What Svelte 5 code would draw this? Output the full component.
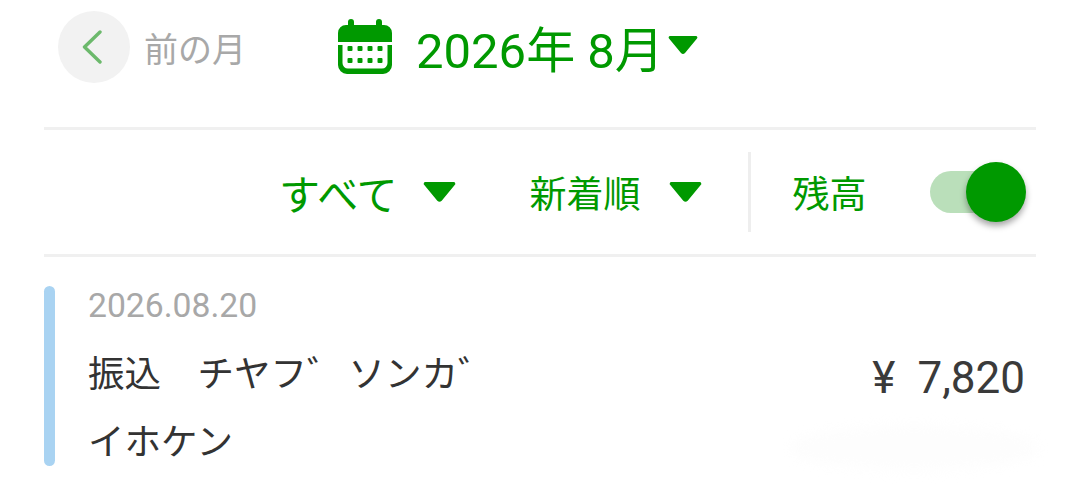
<script>
  let showBalance = $state(true)
</script>

<div class="page">
  <header class="month-bar">
    <div class="prev">
      <button type="button" class="prev-btn" aria-label="前の月">
        <svg width="24" height="34" viewBox="0 0 24 34"><path d="M20 2 L4.500 17 L20 32" fill="none" stroke="#6cb96c" stroke-width="3.400" stroke-linecap="round" stroke-linejoin="round"/></svg>
      </button>
      <span class="prev-label">前の月</span>
    </div>
    <div class="current">
      <svg class="cal" width="54" height="55" viewBox="0 0 54 55">
        <path fill="#009900" d="M10 3a3 3 0 0 1 6 0v3h22V3a3 3 0 0 1 6 0v3h2a8 8 0 0 1 8 8v9H0v-9a8 8 0 0 1 8-8h2z"/>
        <path fill="#009900" d="M0 26h4.500v18a5.500 5.500 0 0 0 5.500 5.500h34a5.500 5.500 0 0 0 5.500-5.500V26H54v20a9 9 0 0 1-9 9H9a9 9 0 0 1-9-9z"/>
        {#each [27, 39] as y}
          {#each [9.500, 19.500, 29.500, 39.500] as x}
            <rect {x} {y} width="5" height="5" rx="1" fill="#009900"/>
          {/each}
        {/each}
      </svg>
      <span class="month">2026年 8月</span>
      <svg class="arrow" width="30" height="20" viewBox="0 0 30 20"><path d="M2 1h26a1.500 1.500 0 0 1 1 2.500L17 18a3 3 0 0 1-4 0L1 3.500A1.500 1.500 0 0 1 2 1z" fill="#009900"/></svg>
    </div>
  </header>

  <div class="filters">
    <button type="button" class="filter kind">
      <span>すべて</span>
      <svg width="33" height="22" viewBox="0 0 30 20"><path d="M2 1h26a1.500 1.500 0 0 1 1 2.500L17 18a3 3 0 0 1-4 0L1 3.500A1.500 1.500 0 0 1 2 1z" fill="#009900"/></svg>
    </button>
    <button type="button" class="filter order">
      <span>新着順</span>
      <svg width="33" height="22" viewBox="0 0 30 20"><path d="M2 1h26a1.500 1.500 0 0 1 1 2.500L17 18a3 3 0 0 1-4 0L1 3.500A1.500 1.500 0 0 1 2 1z" fill="#009900"/></svg>
    </button>
    <div class="balance">
      <span>残高</span>
      <button type="button" class="toggle" class:on={showBalance} aria-label="残高" onclick={() => (showBalance = !showBalance)}>
        <span class="knob"></span>
      </button>
    </div>
  </div>

  <div class="entry">
    <div class="marker"></div>
    <div class="info">
      <div class="date">2026.08.20</div>
      <div class="name">振込　チヤフ゛ ソンカ゛<br />イホケン</div>
    </div>
    <div class="amount"><span class="yen">¥</span>7,820</div>
    <div class="smudge"></div>
  </div>
</div>

<style>
  :global(body) {
    margin: 0;
    background: #fff;
  }

  .page {
    width: 1080px;
    height: 490px;
    box-sizing: border-box;
    padding: 0 44px;
    overflow: hidden;
    font-family: Roboto, "Noto Sans CJK JP", sans-serif;
  }

  button {
    border: none;
    background: none;
    padding: 0;
    font: inherit;
    color: inherit;
    cursor: pointer;
  }

  .month-bar {
    height: 130px;
    box-sizing: border-box;
    border-bottom: 3px solid #f0f0f0;
    display: flex;
    align-items: flex-start;
  }

  .prev {
    display: flex;
    align-items: center;
    margin: 11px 0 0 14px;
    width: 280px;
  }

  .prev-btn {
    width: 72px;
    height: 72px;
    border-radius: 50%;
    background: #f2f2f2;
    display: flex;
    align-items: center;
    justify-content: center;
    padding-right: 4px;
    box-sizing: border-box;
  }

  .prev-label {
    margin-left: 14px;
    font-size: 34px;
    color: #a8a8a8;
  }

  .current {
    display: flex;
    align-items: center;
    height: 93px;
    color: #009900;
  }

  .month {
    margin: 10px 0 0 24px;
    font-size: 49px;
    line-height: 1;
  }

  .arrow {
    margin: 0 0 3px 4px;
  }

  .filters {
    height: 127px;
    box-sizing: border-box;
    border-bottom: 3px solid #f0f0f0;
    display: flex;
    align-items: center;
    color: #009900;
    font-size: 37px;
  }

  .filter {
    display: flex;
    align-items: center;
    color: #009900;
  }

  .kind {
    margin-left: 235px;
    font-size: 41px;
  }

  .kind svg {
    margin-left: 25px;
  }

  .order {
    margin-left: 74px;
    font-size: 37px;
  }

  .order svg {
    margin-left: 28px;
  }

  .balance {
    margin-left: 46px;
    height: 80px;
    border-left: 3px solid #eeeeee;
    display: flex;
    align-items: center;
    font-size: 37px;
    padding-left: 42px;
  }

  .toggle {
    position: relative;
    margin-left: 63px;
    width: 90px;
    height: 42px;
    border-radius: 21px;
    background: #badfba;
  }

  .knob {
    position: absolute;
    top: -9px;
    right: -6px;
    width: 60px;
    height: 60px;
    border-radius: 50%;
    background: #009900;
    box-shadow: 0 4px 6px rgba(0, 0, 0, 0.35);
  }

  .toggle:not(.on) .knob {
    right: auto;
    left: -6px;
    background: #ccc;
  }

  .entry {
    position: relative;
    display: flex;
    align-items: stretch;
    margin-top: 29px;
    height: 180px;
  }

  .marker {
    width: 11px;
    background: #a9d3f2;
    border-radius: 6px;
  }

  .info {
    margin-left: 34px;
    flex: 1;
  }

  .date {
    font-size: 33.700px;
    line-height: 40px;
    color: #a8a8a8;
    margin-left: -1px;
  }

  .name {
    margin-top: 15px;
    font-size: 36.500px;
    line-height: 68px;
    word-spacing: -4px;
    color: #333;
    white-space: pre;
    margin-left: -1px;
  }

  .amount {
    align-self: center;
    margin: 3px 11px 0 0;
    font-size: 44px;
    color: #3a3a3a;
  }

  .yen {
    margin-right: 22px;
  }

  .smudge {
    position: absolute;
    left: 745px;
    top: 140px;
    width: 250px;
    height: 44px;
    border-radius: 50%;
    background: #fdfdfd;
    filter: blur(6px);
  }
</style>
